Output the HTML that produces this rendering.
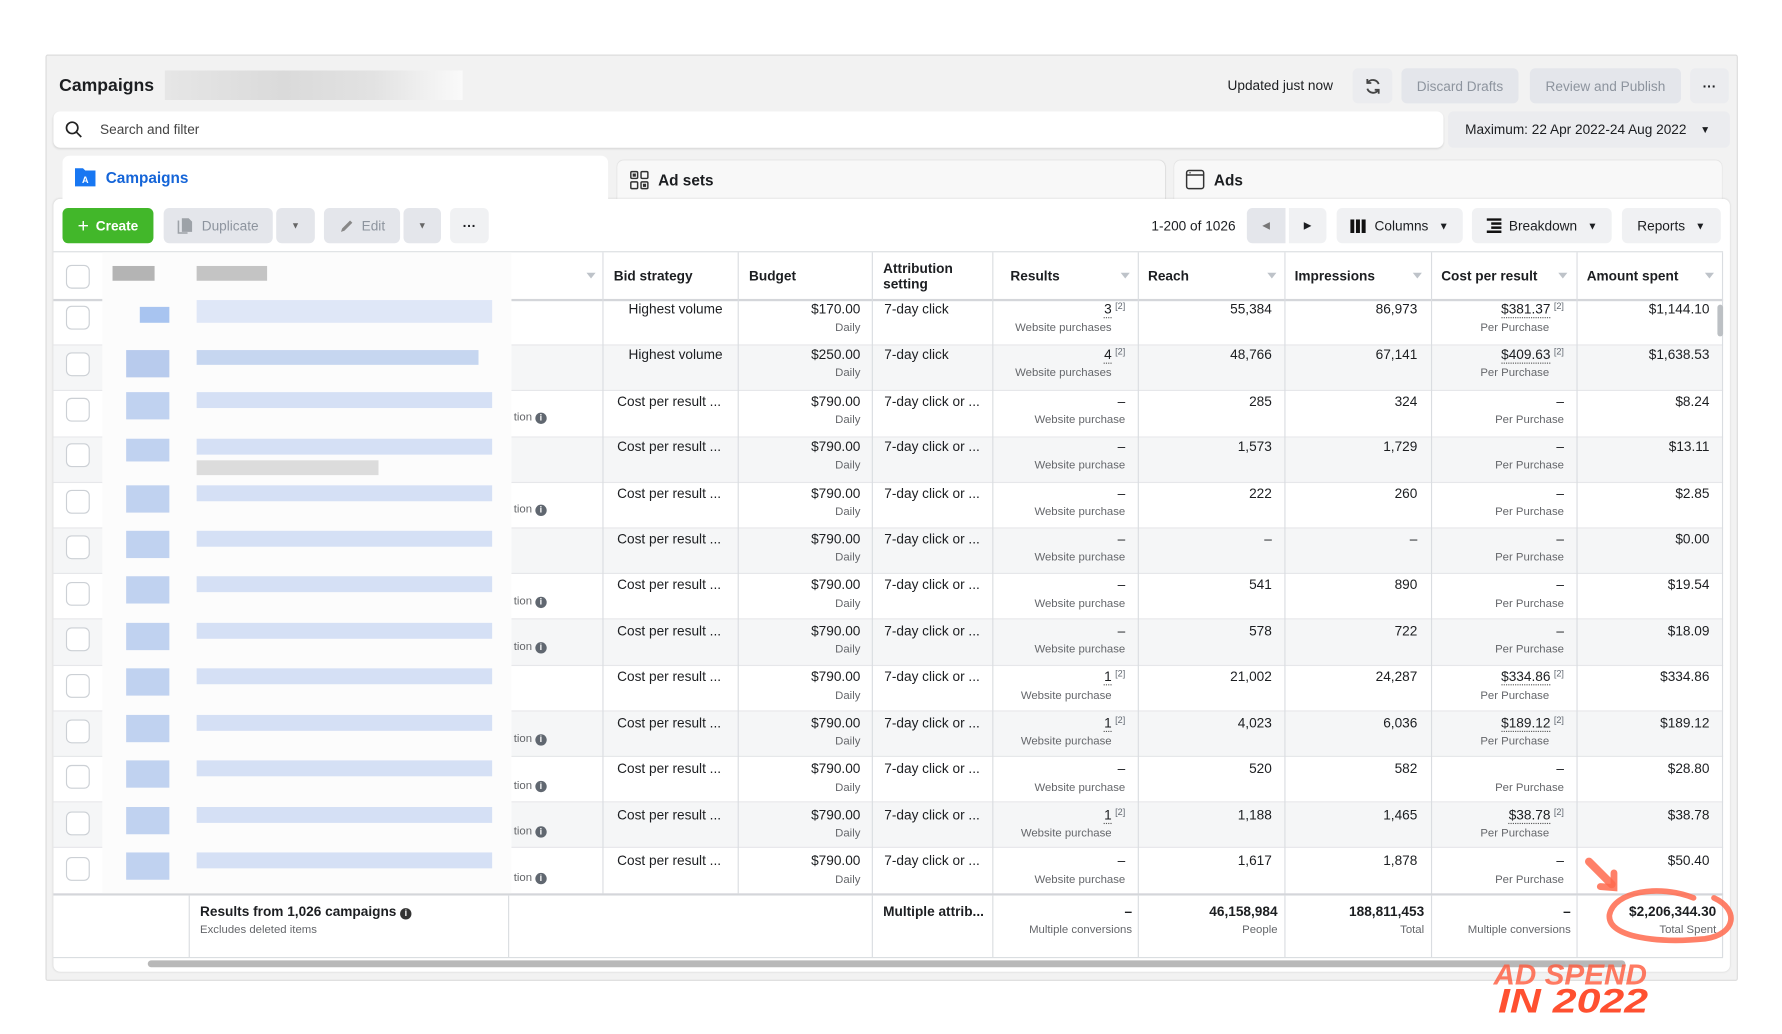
<!DOCTYPE html>
<html><head><meta charset="utf-8"><style>
*{box-sizing:border-box;margin:0;padding:0}
html,body{width:1782px;height:1034px;overflow:hidden;background:#fff;font-family:"Liberation Sans",Arial,sans-serif;color:#1c1e21}
#w{position:absolute;left:0;top:0;width:1568px;height:910px;transform:scale(1.1366);transform-origin:0 0}
.a{position:absolute}
.btn{position:absolute;background:#ebecef;border-radius:5px;font-size:12px;display:flex;align-items:center;justify-content:center}
.dis{background:#e4e6eb;color:#8d949e}
.row{position:absolute;left:47px;width:1469px;height:40.2px;border-bottom:1px solid #e6e7ea}
.row.t{background:#f5f6f7}
.c{position:absolute;font-size:12px;white-space:nowrap}
.s{position:absolute;font-size:10px;color:#65676b;white-space:nowrap}
.r{text-align:right}
.sup{font-size:8px;color:#606770;vertical-align:top;margin-left:3px}
.u{border-bottom:1px dotted #555}
.vl{position:absolute;top:222px;height:620px;width:1px;background:#dadde1}
.hd{position:absolute;top:222px;height:42px;font-size:12px;font-weight:bold;display:flex;align-items:center}
.car{position:absolute;top:240px;width:0;height:0;border-left:4px solid transparent;border-right:4px solid transparent;border-top:5px solid #bec3c9}
.cb{position:absolute;left:58px;width:21px;height:21px;border:1px solid #ccd0d5;border-radius:5px;background:#fff}
.bl{position:absolute;background:#d5e0f5}
</style></head><body><div id="w">
<div class="a" style="left:40px;top:48px;width:1489px;height:815px;background:#f2f2f2;border:1px solid #dcdcdc;border-radius:2px"></div>
<div class="a" style="left:52px;top:67px;font-size:15.5px;font-weight:bold">Campaigns</div>
<div class="a" style="left:145px;top:62px;width:262px;height:26px;background:linear-gradient(90deg,#e6e6e6,#dadada 40%,#e2e2e2 70%,#fafafa)"></div>
<div class="a" style="left:1080px;top:68px;font-size:12px">Updated just now</div>
<div class="btn" style="left:1190px;top:60px;width:35px;height:31px"><svg width="16" height="16" viewBox="0 0 16 16" fill="none" stroke="#444" stroke-width="1.6"><path d="M13 6A5.5 5.5 0 0 0 3.5 4.5M3 10a5.5 5.5 0 0 0 9.5 1.5"/><path d="M3 1.5v3.5h3.5M13 14.5V11H9.5"/></svg></div>
<div class="btn dis" style="left:1233px;top:60px;width:103px;height:31px">Discard Drafts</div>
<div class="btn dis" style="left:1346px;top:60px;width:133px;height:31px">Review and Publish</div>
<div class="btn" style="left:1487px;top:60px;width:34px;height:31px;font-weight:bold">···</div>
<div class="a" style="left:47px;top:98px;width:1223px;height:32px;background:#fff;border-radius:6px;box-shadow:0 1px 2px rgba(0,0,0,.12)"></div>
<svg class="a" style="left:57px;top:106px" width="16" height="16" viewBox="0 0 16 16" fill="none" stroke="#222" stroke-width="1.5"><circle cx="6.5" cy="6.5" r="5"/><path d="M10.2 10.2L14.5 14.5"/></svg>
<div class="a" style="left:88px;top:107px;font-size:12px;color:#444">Search and filter</div>
<div class="btn" style="left:1274px;top:98px;width:248px;height:32px;justify-content:flex-start;padding-left:15px">Maximum: 22 Apr 2022-24 Aug 2022<span style="margin-left:12px;font-size:9px">▼</span></div>
<div class="a" style="left:543px;top:141px;width:482px;height:36px;background:#f8f8f8;border-radius:6px 6px 0 0;box-shadow:0 0 1px rgba(0,0,0,.15)"></div>
<div class="a" style="left:1033px;top:141px;width:482px;height:36px;background:#f8f8f8;border-radius:6px 6px 0 0;box-shadow:0 0 1px rgba(0,0,0,.15)"></div>
<div class="a" style="left:47px;top:175px;width:1475px;height:680px;background:#fff;border-radius:6px;box-shadow:0 0 2px rgba(0,0,0,.12)"></div>
<div class="a" style="left:55px;top:137px;width:480px;height:45px;background:#fff;border-radius:6px 6px 0 0"></div>
<svg class="a" style="left:65px;top:147px" width="20" height="18" viewBox="0 0 20 18"><path d="M1 1h7l2 2h9v14H1z" fill="#1877f2"/><text x="10" y="14" font-size="8" fill="#fff" text-anchor="middle" font-family="Liberation Sans" font-weight="bold">A</text></svg>
<div class="a" style="left:93px;top:149px;font-size:13.5px;font-weight:bold;color:#1565d8">Campaigns</div>
<svg class="a" style="left:554px;top:150px" width="17" height="17" viewBox="0 0 17 17" fill="none" stroke="#333" stroke-width="1.3"><rect x="1" y="1" width="6" height="6" rx="1"/><rect x="10" y="1" width="6" height="6" rx="1"/><rect x="1" y="10" width="6" height="6" rx="1"/><rect x="10" y="10" width="6" height="6" rx="1"/><rect x="3.3" y="3.3" width="1.5" height="1.5" fill="#333"/><rect x="12.3" y="12.3" width="1.5" height="1.5" fill="#333"/></svg>
<div class="a" style="left:579px;top:151px;font-size:13.5px;font-weight:bold">Ad sets</div>
<svg class="a" style="left:1043px;top:149px" width="17" height="18" viewBox="0 0 17 18" fill="none" stroke="#333" stroke-width="1.3"><rect x="1" y="1" width="15" height="16" rx="2"/><path d="M1 5h15"/><path d="M3.5 3h1"/></svg>
<div class="a" style="left:1068px;top:151px;font-size:13.5px;font-weight:bold">Ads</div>
<div class="btn" style="left:55px;top:183px;width:80px;height:31px;background:#42b72a;color:#fff;font-weight:bold"><span style="font-size:17px;font-weight:normal;margin-right:6px">+</span>Create</div>
<div class="btn dis" style="left:144px;top:183px;width:96px;height:31px;color:#8d949e"><svg width="14" height="15" viewBox="0 0 14 15" style="margin-right:7px"><path d="M4 1h6l3 3v9H4z" fill="#9da2a8"/><path d="M1 3v11h8" fill="none" stroke="#9da2a8" stroke-width="1.4"/></svg>Duplicate</div>
<div class="btn dis" style="left:243px;top:183px;width:34px;height:31px;font-size:8px;color:#666">▼</div>
<div class="btn dis" style="left:285px;top:183px;width:67px;height:31px"><svg width="14" height="14" viewBox="0 0 14 14" style="margin-right:6px"><path d="M2 12l1-3 7-7 2 2-7 7z" fill="#888"/></svg>Edit</div>
<div class="btn dis" style="left:355px;top:183px;width:33px;height:31px;font-size:8px;color:#666">▼</div>
<div class="btn" style="left:396px;top:183px;width:34px;height:31px;font-weight:bold;background:#f0f1f3">···</div>
<div class="a" style="left:1013px;top:192px;font-size:12px">1-200 of 1026</div>
<div class="btn" style="left:1097px;top:183px;width:34px;height:31px;background:#e4e6eb;font-size:9px;color:#777;border-radius:5px 0 0 5px">◀</div>
<div class="btn" style="left:1134px;top:183px;width:33px;height:31px;background:#f0f1f3;font-size:9px;border-radius:0 5px 5px 0">▶</div>
<div class="btn" style="left:1176px;top:183px;width:111px;height:31px;background:#f0f1f3"><svg width="14" height="12" style="margin-right:7px"><rect x="0" y="0" width="3.5" height="12" fill="#111"/><rect x="5" y="0" width="3.5" height="12" fill="#111"/><rect x="10" y="0" width="3.5" height="12" fill="#111"/></svg>Columns<span style="font-size:9px;margin-left:9px">▼</span></div>
<div class="btn" style="left:1295px;top:183px;width:123px;height:31px;background:#f0f1f3"><svg width="13" height="13" style="margin-right:7px"><rect x="0" y="0" width="13" height="2.2" fill="#111"/><rect x="4" y="3.6" width="9" height="2.2" fill="#111"/><rect x="4" y="7.2" width="9" height="2.2" fill="#111"/><rect x="0" y="10.8" width="13" height="2.2" fill="#111"/></svg>Breakdown<span style="font-size:9px;margin-left:9px">▼</span></div>
<div class="btn" style="left:1427px;top:183px;width:87px;height:31px;background:#f0f1f3">Reports<span style="font-size:9px;margin-left:9px">▼</span></div>
<div class="a" style="left:47px;top:221px;width:1469px;height:1px;background:#dadde1"></div>
<div class="a" style="left:47px;top:263px;width:1469px;height:2px;background:#d4d6da"></div>
<div class="hd" style="left:540px">Bid strategy</div>
<div class="hd" style="left:659px">Budget</div>
<div class="hd" style="left:777px;line-height:14px">Attribution<br>setting</div>
<div class="hd" style="left:889px">Results</div>
<div class="hd" style="left:1010px">Reach</div>
<div class="hd" style="left:1139px">Impressions</div>
<div class="hd" style="left:1268px">Cost per result</div>
<div class="hd" style="left:1396px">Amount spent</div>
<div class="car" style="left:516px"></div><div class="car" style="left:986px"></div><div class="car" style="left:1115px"></div><div class="car" style="left:1243px"></div><div class="car" style="left:1371px"></div><div class="car" style="left:1500px"></div>

<div class="row" style="top:264px"></div>
<div class="row t" style="top:304.2px"></div>
<div class="row" style="top:344.4px"></div>
<div class="row t" style="top:384.6px"></div>
<div class="row" style="top:424.8px"></div>
<div class="row t" style="top:465px"></div>
<div class="row" style="top:505.2px"></div>
<div class="row t" style="top:545.4px"></div>
<div class="row" style="top:585.6px"></div>
<div class="row t" style="top:625.8px"></div>
<div class="row" style="top:666px"></div>
<div class="row t" style="top:706.2px"></div>
<div class="row" style="top:746.4px"></div>

<div class="vl" style="left:530px;height:564px"></div><div class="vl" style="left:649px;height:564px"></div><div class="vl" style="left:767px"></div><div class="vl" style="left:873px"></div><div class="vl" style="left:1001px"></div><div class="vl" style="left:1130px"></div><div class="vl" style="left:1259px"></div><div class="vl" style="left:1387px"></div><div class="vl" style="left:1515px"></div>

<div class="c" style="left:553px;top:265px">Highest volume</div>
<div class="c" style="left:553px;top:305px">Highest volume</div>
<div class="c" style="left:543px;top:346px">Cost per result ...</div>
<div class="c" style="left:543px;top:386px">Cost per result ...</div>
<div class="c" style="left:543px;top:427px">Cost per result ...</div>
<div class="c" style="left:543px;top:467px">Cost per result ...</div>
<div class="c" style="left:543px;top:507px">Cost per result ...</div>
<div class="c" style="left:543px;top:548px">Cost per result ...</div>
<div class="c" style="left:543px;top:588px">Cost per result ...</div>
<div class="c" style="left:543px;top:629px">Cost per result ...</div>
<div class="c" style="left:543px;top:669px">Cost per result ...</div>
<div class="c" style="left:543px;top:710px">Cost per result ...</div>
<div class="c" style="left:543px;top:750px">Cost per result ...</div>

<div style="position:absolute;left:650px;top:0;width:107px">
<div class="c r" style="right:0;top:265px">$170.00</div><div class="s r" style="right:0;top:283px">Daily</div>
<div class="c r" style="right:0;top:305px">$250.00</div><div class="s r" style="right:0;top:323px">Daily</div>
<div class="c r" style="right:0;top:346px">$790.00</div><div class="s r" style="right:0;top:364px">Daily</div>
<div class="c r" style="right:0;top:386px">$790.00</div><div class="s r" style="right:0;top:404px">Daily</div>
<div class="c r" style="right:0;top:427px">$790.00</div><div class="s r" style="right:0;top:445px">Daily</div>
<div class="c r" style="right:0;top:467px">$790.00</div><div class="s r" style="right:0;top:485px">Daily</div>
<div class="c r" style="right:0;top:507px">$790.00</div><div class="s r" style="right:0;top:526px">Daily</div>
<div class="c r" style="right:0;top:548px">$790.00</div><div class="s r" style="right:0;top:566px">Daily</div>
<div class="c r" style="right:0;top:588px">$790.00</div><div class="s r" style="right:0;top:607px">Daily</div>
<div class="c r" style="right:0;top:629px">$790.00</div><div class="s r" style="right:0;top:647px">Daily</div>
<div class="c r" style="right:0;top:669px">$790.00</div><div class="s r" style="right:0;top:688px">Daily</div>
<div class="c r" style="right:0;top:710px">$790.00</div><div class="s r" style="right:0;top:728px">Daily</div>
<div class="c r" style="right:0;top:750px">$790.00</div><div class="s r" style="right:0;top:769px">Daily</div>
</div>

<div class="c" style="left:778px;top:265px">7-day click</div>
<div class="c" style="left:778px;top:305px">7-day click</div>
<div class="c" style="left:778px;top:346px">7-day click or ...</div>
<div class="c" style="left:778px;top:386px">7-day click or ...</div>
<div class="c" style="left:778px;top:427px">7-day click or ...</div>
<div class="c" style="left:778px;top:467px">7-day click or ...</div>
<div class="c" style="left:778px;top:507px">7-day click or ...</div>
<div class="c" style="left:778px;top:548px">7-day click or ...</div>
<div class="c" style="left:778px;top:588px">7-day click or ...</div>
<div class="c" style="left:778px;top:629px">7-day click or ...</div>
<div class="c" style="left:778px;top:669px">7-day click or ...</div>
<div class="c" style="left:778px;top:710px">7-day click or ...</div>
<div class="c" style="left:778px;top:750px">7-day click or ...</div>

<div style="position:absolute;left:874px;top:0;width:116px">
<div class="c r" style="right:0;top:265px"><span class="u">3</span><span class="sup">[2]</span></div><div class="s r" style="right:12px;top:283px">Website purchases</div>
<div class="c r" style="right:0;top:305px"><span class="u">4</span><span class="sup">[2]</span></div><div class="s r" style="right:12px;top:323px">Website purchases</div>
<div class="c r" style="right:0;top:346px">–</div><div class="s r" style="right:0;top:364px">Website purchase</div>
<div class="c r" style="right:0;top:386px">–</div><div class="s r" style="right:0;top:404px">Website purchase</div>
<div class="c r" style="right:0;top:427px">–</div><div class="s r" style="right:0;top:445px">Website purchase</div>
<div class="c r" style="right:0;top:467px">–</div><div class="s r" style="right:0;top:485px">Website purchase</div>
<div class="c r" style="right:0;top:507px">–</div><div class="s r" style="right:0;top:526px">Website purchase</div>
<div class="c r" style="right:0;top:548px">–</div><div class="s r" style="right:0;top:566px">Website purchase</div>
<div class="c r" style="right:0;top:588px"><span class="u">1</span><span class="sup">[2]</span></div><div class="s r" style="right:12px;top:607px">Website purchase</div>
<div class="c r" style="right:0;top:629px"><span class="u">1</span><span class="sup">[2]</span></div><div class="s r" style="right:12px;top:647px">Website purchase</div>
<div class="c r" style="right:0;top:669px">–</div><div class="s r" style="right:0;top:688px">Website purchase</div>
<div class="c r" style="right:0;top:710px"><span class="u">1</span><span class="sup">[2]</span></div><div class="s r" style="right:12px;top:728px">Website purchase</div>
<div class="c r" style="right:0;top:750px">–</div><div class="s r" style="right:0;top:769px">Website purchase</div>
</div>

<div style="position:absolute;left:1002px;top:0;width:117px">
<div class="c r" style="right:0;top:265px">55,384</div><div class="c r" style="right:0;top:305px">48,766</div><div class="c r" style="right:0;top:346px">285</div><div class="c r" style="right:0;top:386px">1,573</div><div class="c r" style="right:0;top:427px">222</div><div class="c r" style="right:0;top:467px">–</div><div class="c r" style="right:0;top:507px">541</div><div class="c r" style="right:0;top:548px">578</div><div class="c r" style="right:0;top:588px">21,002</div><div class="c r" style="right:0;top:629px">4,023</div><div class="c r" style="right:0;top:669px">520</div><div class="c r" style="right:0;top:710px">1,188</div><div class="c r" style="right:0;top:750px">1,617</div>
</div>
<div style="position:absolute;left:1131px;top:0;width:116px">
<div class="c r" style="right:0;top:265px">86,973</div><div class="c r" style="right:0;top:305px">67,141</div><div class="c r" style="right:0;top:346px">324</div><div class="c r" style="right:0;top:386px">1,729</div><div class="c r" style="right:0;top:427px">260</div><div class="c r" style="right:0;top:467px">–</div><div class="c r" style="right:0;top:507px">890</div><div class="c r" style="right:0;top:548px">722</div><div class="c r" style="right:0;top:588px">24,287</div><div class="c r" style="right:0;top:629px">6,036</div><div class="c r" style="right:0;top:669px">582</div><div class="c r" style="right:0;top:710px">1,465</div><div class="c r" style="right:0;top:750px">1,878</div>
</div>
<div style="position:absolute;left:1260px;top:0;width:116px">
<div class="c r" style="right:0;top:265px"><span class="u">$381.37</span><span class="sup">[2]</span></div><div class="s r" style="right:13px;top:283px">Per Purchase</div>
<div class="c r" style="right:0;top:305px"><span class="u">$409.63</span><span class="sup">[2]</span></div><div class="s r" style="right:13px;top:323px">Per Purchase</div>
<div class="c r" style="right:0;top:346px">–</div><div class="s r" style="right:0;top:364px">Per Purchase</div>
<div class="c r" style="right:0;top:386px">–</div><div class="s r" style="right:0;top:404px">Per Purchase</div>
<div class="c r" style="right:0;top:427px">–</div><div class="s r" style="right:0;top:445px">Per Purchase</div>
<div class="c r" style="right:0;top:467px">–</div><div class="s r" style="right:0;top:485px">Per Purchase</div>
<div class="c r" style="right:0;top:507px">–</div><div class="s r" style="right:0;top:526px">Per Purchase</div>
<div class="c r" style="right:0;top:548px">–</div><div class="s r" style="right:0;top:566px">Per Purchase</div>
<div class="c r" style="right:0;top:588px"><span class="u">$334.86</span><span class="sup">[2]</span></div><div class="s r" style="right:13px;top:607px">Per Purchase</div>
<div class="c r" style="right:0;top:629px"><span class="u">$189.12</span><span class="sup">[2]</span></div><div class="s r" style="right:13px;top:647px">Per Purchase</div>
<div class="c r" style="right:0;top:669px">–</div><div class="s r" style="right:0;top:688px">Per Purchase</div>
<div class="c r" style="right:0;top:710px"><span class="u">$38.78</span><span class="sup">[2]</span></div><div class="s r" style="right:13px;top:728px">Per Purchase</div>
<div class="c r" style="right:0;top:750px">–</div><div class="s r" style="right:0;top:769px">Per Purchase</div>
</div>
<div style="position:absolute;left:1388px;top:0;width:116px">
<div class="c r" style="right:0;top:265px">$1,144.10</div><div class="c r" style="right:0;top:305px">$1,638.53</div><div class="c r" style="right:0;top:346px">$8.24</div><div class="c r" style="right:0;top:386px">$13.11</div><div class="c r" style="right:0;top:427px">$2.85</div><div class="c r" style="right:0;top:467px">$0.00</div><div class="c r" style="right:0;top:507px">$19.54</div><div class="c r" style="right:0;top:548px">$18.09</div><div class="c r" style="right:0;top:588px">$334.86</div><div class="c r" style="right:0;top:629px">$189.12</div><div class="c r" style="right:0;top:669px">$28.80</div><div class="c r" style="right:0;top:710px">$38.78</div><div class="c r" style="right:0;top:750px">$50.40</div>
</div>
<div class="a" style="left:1511px;top:268px;width:5px;height:28px;background:#bcc0c4;border-radius:3px"></div>

<div class="s" style="left:452px;top:362px">tion <b style="display:inline-block;width:10px;height:10px;border-radius:50%;background:#606770;color:#fff;font-size:8px;text-align:center;line-height:10px">i</b></div>
<div class="s" style="left:452px;top:443px">tion <b style="display:inline-block;width:10px;height:10px;border-radius:50%;background:#606770;color:#fff;font-size:8px;text-align:center;line-height:10px">i</b></div>
<div class="s" style="left:452px;top:524px">tion <b style="display:inline-block;width:10px;height:10px;border-radius:50%;background:#606770;color:#fff;font-size:8px;text-align:center;line-height:10px">i</b></div>
<div class="s" style="left:452px;top:564px">tion <b style="display:inline-block;width:10px;height:10px;border-radius:50%;background:#606770;color:#fff;font-size:8px;text-align:center;line-height:10px">i</b></div>
<div class="s" style="left:452px;top:645px">tion <b style="display:inline-block;width:10px;height:10px;border-radius:50%;background:#606770;color:#fff;font-size:8px;text-align:center;line-height:10px">i</b></div>
<div class="s" style="left:452px;top:686px">tion <b style="display:inline-block;width:10px;height:10px;border-radius:50%;background:#606770;color:#fff;font-size:8px;text-align:center;line-height:10px">i</b></div>
<div class="s" style="left:452px;top:726px">tion <b style="display:inline-block;width:10px;height:10px;border-radius:50%;background:#606770;color:#fff;font-size:8px;text-align:center;line-height:10px">i</b></div>
<div class="s" style="left:452px;top:767px">tion <b style="display:inline-block;width:10px;height:10px;border-radius:50%;background:#606770;color:#fff;font-size:8px;text-align:center;line-height:10px">i</b></div>

<div class="a" style="left:90px;top:222px;width:360px;height:566px;background:#fcfcfc"></div>
<div class="a" style="left:99px;top:234px;width:37px;height:13px;background:#b4b4b4"></div>
<div class="a" style="left:173px;top:234px;width:62px;height:13px;background:#c4c4c4"></div>
<div class="a" style="left:173px;top:405px;width:160px;height:13px;background:#dcdcdc"></div>
<div class="bl" style="left:173px;top:264px;width:260px;height:20px;opacity:.75"></div><div class="bl" style="left:123px;top:270px;width:26px;height:14px;background:#a8c4f0"></div>
<div class="bl" style="left:173px;top:308px;width:248px;height:13px;background:#c6d6f0"></div><div class="bl" style="left:111px;top:308px;width:38px;height:24px;background:#b8cbed"></div>
<div class="bl" style="left:173px;top:345px;width:260px;height:14px"></div><div class="bl" style="left:111px;top:345px;width:38px;height:24px;background:#c0d2f0"></div>
<div class="bl" style="left:173px;top:386px;width:260px;height:14px"></div><div class="bl" style="left:111px;top:386px;width:38px;height:20px;background:#c0d2f0"></div>
<div class="bl" style="left:173px;top:427px;width:260px;height:14px"></div><div class="bl" style="left:111px;top:427px;width:38px;height:24px;background:#c0d2f0"></div>
<div class="bl" style="left:173px;top:467px;width:260px;height:14px"></div><div class="bl" style="left:111px;top:467px;width:38px;height:24px;background:#c0d2f0"></div>
<div class="bl" style="left:173px;top:507px;width:260px;height:14px"></div><div class="bl" style="left:111px;top:507px;width:38px;height:24px;background:#c0d2f0"></div>
<div class="bl" style="left:173px;top:548px;width:260px;height:14px"></div><div class="bl" style="left:111px;top:548px;width:38px;height:24px;background:#c0d2f0"></div>
<div class="bl" style="left:173px;top:588px;width:260px;height:14px"></div><div class="bl" style="left:111px;top:588px;width:38px;height:24px;background:#c0d2f0"></div>
<div class="bl" style="left:173px;top:629px;width:260px;height:14px"></div><div class="bl" style="left:111px;top:629px;width:38px;height:24px;background:#c0d2f0"></div>
<div class="bl" style="left:173px;top:669px;width:260px;height:14px"></div><div class="bl" style="left:111px;top:669px;width:38px;height:24px;background:#c0d2f0"></div>
<div class="bl" style="left:173px;top:710px;width:260px;height:14px"></div><div class="bl" style="left:111px;top:710px;width:38px;height:24px;background:#c0d2f0"></div>
<div class="bl" style="left:173px;top:750px;width:260px;height:14px"></div><div class="bl" style="left:111px;top:750px;width:38px;height:24px;background:#c0d2f0"></div>
<div class="cb" style="top:233px"></div><div class="cb" style="top:269px"></div><div class="cb" style="top:310px"></div><div class="cb" style="top:350px"></div><div class="cb" style="top:390px"></div><div class="cb" style="top:431px"></div><div class="cb" style="top:471px"></div><div class="cb" style="top:512px"></div><div class="cb" style="top:552px"></div><div class="cb" style="top:593px"></div><div class="cb" style="top:633px"></div><div class="cb" style="top:673px"></div><div class="cb" style="top:714px"></div><div class="cb" style="top:754px"></div>

<div class="a" style="left:47px;top:786px;width:1469px;height:2px;background:#d4d6da"></div>
<div class="a" style="left:47px;top:788px;width:1469px;height:54px;background:#fff"></div>
<div class="vl" style="left:166px;top:788px;height:54px"></div><div class="vl" style="left:447px;top:788px;height:54px"></div><div class="vl" style="left:767px;top:788px;height:54px"></div><div class="vl" style="left:873px;top:788px;height:54px"></div><div class="vl" style="left:1001px;top:788px;height:54px"></div><div class="vl" style="left:1130px;top:788px;height:54px"></div><div class="vl" style="left:1259px;top:788px;height:54px"></div><div class="vl" style="left:1387px;top:788px;height:54px"></div><div class="vl" style="left:1515px;top:788px;height:54px"></div>
<div class="c" style="left:176px;top:795px;font-weight:bold;font-size:12px">Results from 1,026 campaigns <b style="display:inline-block;width:10px;height:10px;border-radius:50%;background:#333;color:#fff;font-size:8px;text-align:center;line-height:10px">i</b></div>
<div class="s" style="left:176px;top:813px">Excludes deleted items</div>
<div class="c" style="left:777px;top:795px;font-weight:bold;font-size:12px">Multiple attrib...</div>
<div class="c r" style="left:874px;width:122px;top:795px;font-weight:bold">–</div><div class="s r" style="left:874px;width:122px;top:813px">Multiple conversions</div>
<div class="c r" style="left:1002px;width:122px;top:795px;font-weight:bold">46,158,984</div><div class="s r" style="left:1002px;width:122px;top:813px">People</div>
<div class="c r" style="left:1131px;width:122px;top:795px;font-weight:bold">188,811,453</div><div class="s r" style="left:1131px;width:122px;top:813px">Total</div>
<div class="c r" style="left:1260px;width:122px;top:795px;font-weight:bold">–</div><div class="s r" style="left:1260px;width:122px;top:813px">Multiple conversions</div>
<div class="c r" style="left:1388px;width:122px;top:795px;font-weight:bold">$2,206,344.30</div><div class="s r" style="left:1388px;width:122px;top:813px">Total Spent</div>
<div class="a" style="left:47px;top:842px;width:1469px;height:1px;background:#dadde1"></div>
<div class="a" style="left:130px;top:845px;width:1300px;height:6px;background:#b8b8b8;border-radius:3px"></div>

<svg class="a" style="left:0;top:0" width="1568" height="910" viewBox="0 0 1568 910">
<path d="M1398 758 L1418 778" stroke="#ff6a4d" stroke-width="7" stroke-linecap="round" fill="none" opacity=".85"/>
<path d="M1408 780 L1420 781 L1420 768" stroke="#ff6a4d" stroke-width="6" stroke-linecap="round" fill="none" opacity=".85"/>
<path d="M1490 790 C1460 778 1420 784 1416 805 C1414 825 1460 830 1500 826 C1528 822 1530 800 1508 790" stroke="#ff6a4d" stroke-width="5" fill="none" stroke-linecap="round" opacity=".85"/>
<text x="1314" y="866" font-family="Liberation Sans" font-weight="bold" font-style="italic" font-size="25" fill="#ff5a3c" opacity=".8" textLength="135" lengthAdjust="spacingAndGlyphs">AD SPEND</text>
<text x="1318" y="891" font-family="Liberation Sans" font-weight="bold" font-style="italic" font-size="30" fill="#ff5030" textLength="132" lengthAdjust="spacingAndGlyphs">IN 2022</text>
</svg>
</div></body></html>
